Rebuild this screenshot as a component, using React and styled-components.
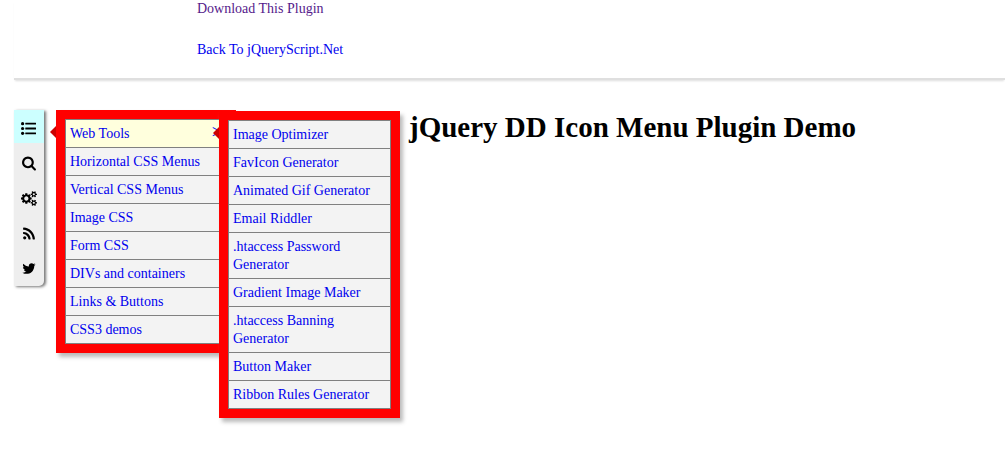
import styled, { createGlobalStyle } from "styled-components"

const GlobalStyle = createGlobalStyle`
    body {
        margin: 0;
        background-color: white;
        color: black;
        font-family: "Liberation Serif", "Times New Roman", serif;
        font-size: 14px;
        line-height: 18px;
    }
`

const Page = styled.div`
    min-height: 100vh;
`

const Header = styled.header`
    display: flex;
    flex-direction: column;
    align-items: flex-start;
    gap: 23px;
    margin-left: 14px;
    padding: 0 0 19px 183px;
    border-bottom: 2px solid #dfdfdf;
    box-shadow: 0 2px 2px -1px #dddddd;
`

const HeaderLink = styled.a`
    color: ${props => props.$visited ? "#551a8b" : "#0000ee"};
    text-decoration: none;
`

const Content = styled.div`
    display: flex;
    align-items: flex-start;
    padding: 30px 14px 0;
`

const Title = styled.h1`
    flex: 1;
    margin: 0 0 0 365px;
    font-size: 29px;
    line-height: 34px;
`

const IconBar = styled.nav`
    position: relative;
    width: 30px;
`

const IconList = styled.ul`
    display: flex;
    flex-direction: column;
    gap: 2px;
    margin: 0;
    padding: 0 0 3px;
    list-style: none;
    background-color: #eeeeee;
    border-radius: 0 0 5px 0;
    box-shadow: 2px 1px 3px #777777;
`

const IconButton = styled.button`
    display: flex;
    align-items: center;
    justify-content: center;
    width: 100%;
    height: 33px;
    border: none;
    padding: 3px 1px 0 0;
    color: black;
    background-color: ${props => props.$active ? "#ccffff" : "transparent"};
`

const Menu = styled.div`
    position: absolute;
    top: 0;
    left: 42px;
    box-sizing: border-box;
    width: 180px;
    border: 9px solid red;
    background-color: #f3f3f3;
    box-shadow: 3px 4px 4px #bbbbbb;

    &::before {
        content: "";
        position: absolute;
        top: 7px;
        left: -15px;
        border: 6px solid transparent;
        border-left: none;
        border-right-color: #cc0000;
    }
`

// nested menu hangs off its parent row
const SubMenu = styled(Menu)`
    top: -9px;
    left: 153px;
    width: 181px;
    z-index: 1;
`

const MenuList = styled.ul`
    margin: 0;
    padding: 0;
    list-style: none;
    border: 1px solid #808080;
    border-bottom: none;
`

const MenuItem = styled.li`
    position: relative;
    border-bottom: 1px solid #808080;
`

const MenuLink = styled.a`
    display: flex;
    justify-content: space-between;
    padding: 5px 4px 4px;
    color: #0000ee;
    background-color: ${props => props.$active ? "#ffffdd" : "#f3f3f3"};
    text-decoration: none;
`

const Arrow = styled.span`
    font-size: 18px;
    line-height: 14px;
`

const Icon = ({ box, width, children }) => (
  <svg viewBox={box} width={width} height="15" fill="currentColor" aria-hidden="true">
    {children}
  </svg>
)

const smallCog = "v140q0 16-149 31-12 27-30 52 51 113 51 138 0 4-4 7-122 71-124 71-8 0-46-47t-52-68q-20 2-30 2t-30-2q-14 21-52 68t-46 47q-2 0-124-71-4-3-4-7 0-25 51-138-18-25-30-52-149-15-149-31v-140q0-16 149-31 13-29 30-52-51-113-51-138 0-4 4-7 4-2 35-20t59-34 30-16q8 0 46 46.5t52 67.5q20-2 30-2t30 2q51-71 92-112l6-2q4 0 124 70 4 3 4 7 0 25-51 138 17 23 30 52 149 15 149 31z"

const icons = [
  {
    label: "Lists",
    icon: (
      <Icon box="0 0 1792 1792" width="15">
        <circle cx="192" cy="320" r="192" />
        <circle cx="192" cy="896" r="192" />
        <circle cx="192" cy="1472" r="192" />
        <rect x="512" y="208" width="1280" height="224" rx="32" />
        <rect x="512" y="784" width="1280" height="224" rx="32" />
        <rect x="512" y="1360" width="1280" height="224" rx="32" />
      </Icon>
    ),
  },
  {
    label: "Search",
    icon: (
      <Icon box="0 -64 1664 1792" width="14">
        <path d="M1152 704q0-185-131.5-316.5t-316.5-131.5-316.5 131.5-131.5 316.5 131.5 316.5 316.5 131.5 316.5-131.5 131.5-316.5zm512 832q0 52-38 90t-90 38q-54 0-90-38l-343-342q-179 124-399 124-143 0-273.5-55.5t-225-150-150-225-55.5-273.5 55.5-273.5 150-225 225-150 273.5-55.5 273.5 55.5 225 150 150 225 55.5 273.5q0 220-124 399l343 343q37 37 37 90z" />
      </Icon>
    ),
  },
  {
    label: "Settings",
    icon: (
      <Icon box="0 0 1920 1792" width="16">
        <path d="M896 896q0-106-75-181t-181-75-181 75-75 181 75 181 181 75 181-75 75-181zm384-91v185q0 10-7 19.5t-16 10.5l-155 24q-11 35-32 76 34 48 90 115 7 11 7 20 0 12-7 19-23 30-82.5 89.5t-78.5 59.5q-11 0-21-7l-115-90q-37 19-77 31-11 108-23 155-7 24-30 24h-186q-11 0-20-7.5t-10-17.5l-23-153q-34-10-75-31l-118 89q-7 7-20 7-11 0-21-8-144-133-144-160 0-9 7-19 10-14 41-53t47-61q-23-44-35-82l-152-24q-10-1-17-9.5t-7-19.5v-185q0-10 7-19.5t16-10.5l155-24q11-35 32-76-34-48-90-115-7-11-7-20 0-12 7-20 22-30 82-89t79-59q11 0 21 7l115 90q34-18 77-32 11-108 23-154 7-24 30-24h186q11 0 20 7.5t10 17.5l23 153q34 10 75 31l118-89q8-7 20-7 11 0 21 8 144 133 144 160 0 8-7 19-12 16-42 54t-45 60q23 48 34 82l152 23q10 2 17 10.5t7 19.5z" />
        <path
          fillRule="evenodd"
          d={`M1920 1338${smallCog}M1664 1408q0-52-38-90t-90-38-90 38-38 90q0 53 37.5 90.5t90.5 37.5 90.5-37.5 37.5-90.5z`}
        />
        <path
          fillRule="evenodd"
          d={`M1920 314${smallCog}M1664 384q0-52-38-90t-90-38-90 38-38 90q0 53 37.5 90.5t90.5 37.5 90.5-37.5 37.5-90.5z`}
        />
      </Icon>
    ),
  },
  {
    label: "Feeds",
    icon: (
      <Icon box="0 -64 1408 1792" width="12">
        <path d="M384 1344q0 80-56 136t-136 56-136-56-56-136 56-136 136-56 136 56 56 136zm512 123q2 28-17 48-18 21-47 21h-135q-25 0-43-16.5t-20-41.5q-22-229-184.5-391.5t-391.5-184.5q-25-2-41.5-20t-16.5-43v-135q0-29 21-47 17-17 43-17h5q160 13 306 80.5t259 181.5q114 113 181.5 259t80.5 306zm512 2q2 27-18 47-18 20-46 20h-143q-26 0-44.5-17.5t-19.5-42.5q-12-215-101-408.5t-231.5-336-336-231.5-408.5-102q-25-1-42.5-19.5t-17.5-43.5v-143q0-28 20-46 18-18 44-18h3q262 13 501.5 120t425.5 294q187 186 294 425.5t120 501.5z" />
      </Icon>
    ),
  },
  {
    label: "Twitter",
    icon: (
      <Icon box="0 0 1664 1792" width="14">
        <path d="M1620 408q-67 98-162 167 1 14 1 42 0 130-38 259.5t-115.5 248.5-184.5 210.5-258 146-323 54.5q-271 0-496-145 35 4 78 4 225 0 401-138-105-2-188-64.5t-114-159.5q33 5 61 5 43 0 85-11-112-23-185.5-111.5t-73.5-205.5v-4q68 38 146 41-66-44-105-115t-39-154q0-88 44-163 121 149 294.5 238.5t371.5 99.5q-8-38-8-74 0-134 94.5-228.5t228.5-94.5q140 0 236 102 109-21 205-78-37 115-142 178 93-10 186-50z" />
      </Icon>
    ),
  },
]

const menuItems = [
  "Horizontal CSS Menus",
  "Vertical CSS Menus",
  "Image CSS",
  "Form CSS",
  "DIVs and containers",
  "Links & Buttons",
  "CSS3 demos",
]

const webTools = [
  "Image Optimizer",
  "FavIcon Generator",
  "Animated Gif Generator",
  "Email Riddler",
  ".htaccess Password Generator",
  "Gradient Image Maker",
  ".htaccess Banning Generator",
  "Button Maker",
  "Ribbon Rules Generator",
]

const App = () => {
  return (
    <Page>
      <GlobalStyle />
      <Header>
        <HeaderLink href="#download" $visited>Download This Plugin</HeaderLink>
        <HeaderLink href="#back">Back To jQueryScript.Net</HeaderLink>
      </Header>
      <Content>
        <IconBar aria-label="Icon menu">
          <IconList>
            {icons.map((item, i) => (
              <li key={item.label}>
                <IconButton type="button" aria-label={item.label} $active={i === 0}>
                  {item.icon}
                </IconButton>
              </li>
            ))}
          </IconList>
          <Menu>
            <MenuList>
              <MenuItem>
                <MenuLink href="#web-tools" $active>
                  Web Tools <Arrow>&gt;</Arrow>
                </MenuLink>
                <SubMenu>
                  <MenuList>
                    {webTools.map(tool => (
                      <MenuItem key={tool}>
                        <MenuLink href="#tool">{tool}</MenuLink>
                      </MenuItem>
                    ))}
                  </MenuList>
                </SubMenu>
              </MenuItem>
              {menuItems.map(item => (
                <MenuItem key={item}>
                  <MenuLink href="#menu">{item}</MenuLink>
                </MenuItem>
              ))}
            </MenuList>
          </Menu>
        </IconBar>
        <Title>jQuery DD Icon Menu Plugin Demo</Title>
      </Content>
    </Page>
  )
}

export default App
